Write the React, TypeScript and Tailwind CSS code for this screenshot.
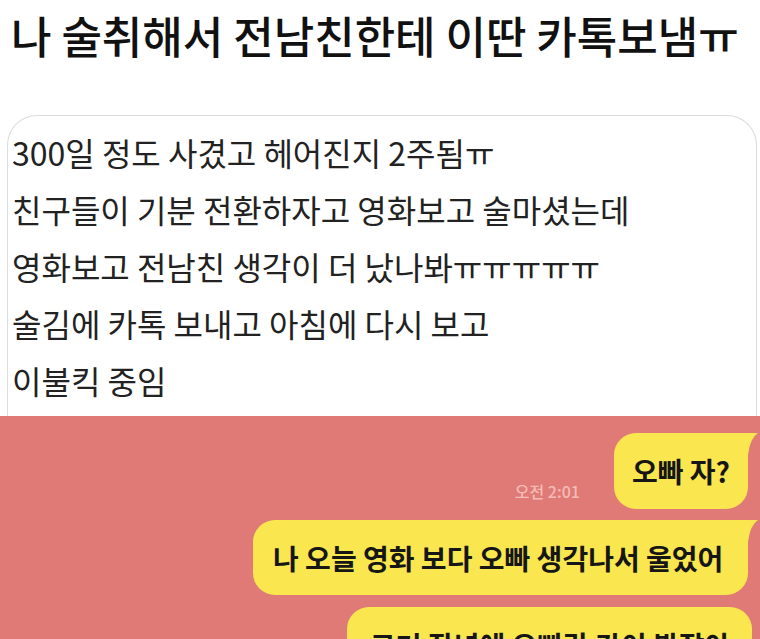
const lines = [
  "300일 정도 사겼고 헤어진지 2주됨ㅠ",
  "친구들이 기분 전환하자고 영화보고 술마셨는데",
  "영화보고 전남친 생각이 더 났나봐ㅠㅠㅠㅠㅠ",
  "술김에 카톡 보내고 아침에 다시 보고",
  "이불킥 중임",
];

function Tail() {
  return (
    <svg className="absolute -right-[10px] top-0" width="34" height="30" viewBox="0 0 34 30" fill="none">
      <path d="M0 0 L34 0 Q26 5 24 22 L24 30 L0 30 Z" fill="#fae64f" />
    </svg>
  );
}

function Bubble({ text, tail, className }: { text: string; tail?: boolean; className?: string }) {
  return (
    <div className={`relative bg-[#fae64f] rounded-[22px] ${className ?? ""}`}>
      {tail && <Tail />}
      <p className="relative text-[28px] font-semibold text-[#161616] leading-none whitespace-nowrap">{text}</p>
    </div>
  );
}

export default function App() {
  return (
    <div
      className="w-[760px] h-[639px] overflow-hidden bg-white flex flex-col"
      style={{ fontFamily: '"Noto Sans CJK KR", "Noto Sans", sans-serif' }}
    >
      {/* post */}
      <div className="h-[416px] shrink-0 overflow-hidden flex flex-col">
        <h1 className="pl-[11px] pt-[9px] h-[115px] text-[44px] leading-[52px] font-medium text-[#111] whitespace-nowrap">
          나 술취해서 전남친한테 이딴 카톡보냄ㅠ
        </h1>
        <div className="ml-[7px] mr-[3px] flex-1 border border-b-0 border-[#dcdcdc] rounded-t-[30px] pt-[8px] pl-[4px]">
          {lines.map((l) => (
            <p key={l} className="text-[32px] leading-[57px] text-[#222] whitespace-nowrap">
              {l}
            </p>
          ))}
        </div>
      </div>

      {/* kakao capture */}
      <div className="flex-1 bg-[#e07a76] pt-[17px] pr-[12px] flex flex-col items-end">
        <div className="flex items-end gap-[34px]">
          <span className="mb-[10px] text-[16px] font-medium text-[#f4bcb6] leading-none">오전 2:01</span>
          <Bubble text="오빠 자?" tail className="h-[76px] px-[18px] flex items-center" />
        </div>
        <Bubble
          text="나 오늘 영화 보다 오빠 생각나서 울었어"
          tail
          className="mt-[11px] h-[75px] w-[495px] px-[20px] flex items-center"
        />
        <Bubble
          text="그거 작년에 오빠랑 같이 봤잖아"
          className="-mr-[4px] mt-[12px] h-[75px] w-[405px] px-[23px] flex items-center"
        />
      </div>
    </div>
  );
}
